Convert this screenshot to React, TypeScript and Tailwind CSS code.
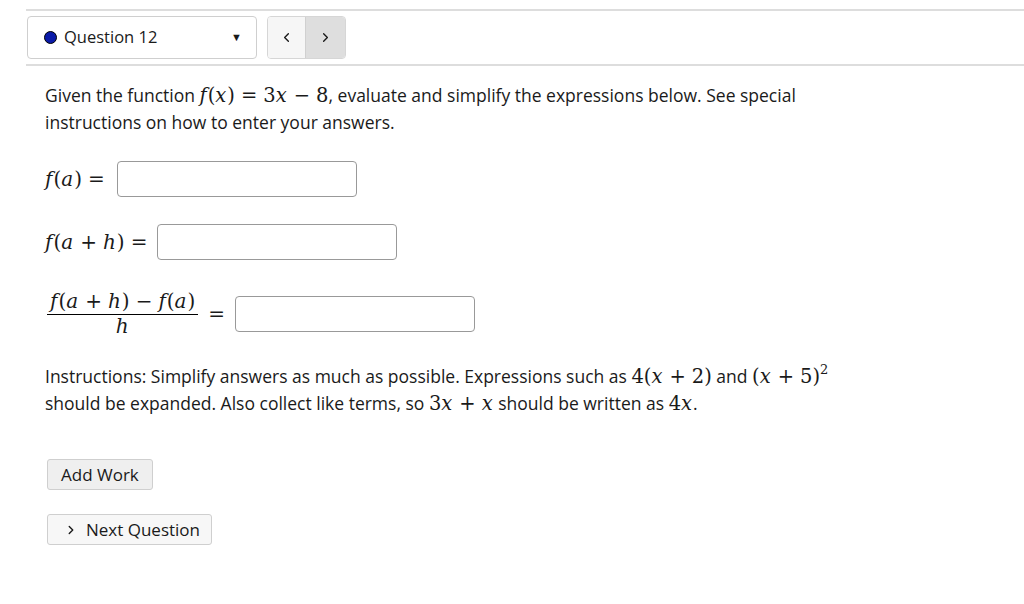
import { ChevronLeft, ChevronRight } from 'lucide-react';

const serif = "font-['DejaVu_Serif','Liberation_Serif',serif]";

function Mi({ children }: { children: React.ReactNode }) {
  return <span className="italic pr-[1px]">{children}</span>;
}

function Rel({ children }: { children: React.ReactNode }) {
  return <span className="not-italic px-[6px]">{children}</span>;
}

function AnswerBox() {
  return <input type="text" className="w-[240px] h-[36px] border border-[#999] rounded-[4px] bg-white outline-none" />;
}

export default function App() {
  return (
    <div className="w-[1024px] h-[604px] bg-white pl-[26px] pt-[9px] text-[#1a1a1a] font-['Open_Sans','Liberation_Sans',sans-serif] text-[17.5px]">
      <div className="border-t-2 border-b-2 border-[#dddddd] py-[4px]">
        <div className="flex items-center gap-[10px] py-[1px] pl-[1px]">
          <div className="w-[230px] h-[43px] border border-[#cfcfcf] rounded-[4px] flex items-center pl-[16px] pr-[12px]">
            <span className="w-[13px] h-[13px] rounded-full bg-[#0a1aa8] border border-black mr-[7px]" />
            <span className="text-[16.5px]">Question 12</span>
            <span className="ml-auto text-[11px] mr-[2px]">▼</span>
          </div>
          <div className="flex h-[43px] border border-[#d6d6d6] rounded-[4px] overflow-hidden">
            <div className="w-[38px] bg-[#f6f6f6] flex items-center justify-center border-r border-[#d0d0d0]">
              <ChevronLeft size={15} strokeWidth={2.2} />
            </div>
            <div className="w-[39px] bg-[#dedede] flex items-center justify-center">
              <ChevronRight size={15} strokeWidth={2.2} />
            </div>
          </div>
        </div>
      </div>

      <div className="pl-[19px] pr-[30px]">
        <p className="mt-[16px] leading-[27px] w-[780px]">
          Given the function{' '}
          <span className={`${serif} text-[19.5px]`}>
            <Mi>f</Mi>(<Mi>x</Mi>)<Rel>=</Rel>3<Mi>x</Mi><Rel>−</Rel>8
          </span>
          , evaluate and simplify the expressions below. See special instructions on how to enter your answers.
        </p>

        <div className={`flex items-center mt-[25px] ${serif} text-[20px]`}>
          <span><Mi>f</Mi>(<Mi>a</Mi>)<Rel>=</Rel></span>
          <span className="ml-[6px]"><AnswerBox /></span>
        </div>

        <div className={`flex items-center mt-[27px] ${serif} text-[20px]`}>
          <span><Mi>f</Mi>(<Mi>a</Mi><Rel>+</Rel><Mi>h</Mi>)<Rel>=</Rel></span>
          <span className="ml-[4px]"><AnswerBox /></span>
        </div>

        <div className={`flex items-center mt-[30px] ${serif} text-[20px]`}>
          <div className="flex flex-col items-center ml-[2px]">
            <span className="leading-[22px] px-[3px]"><Mi>f</Mi>(<Mi>a</Mi><Rel>+</Rel><Mi>h</Mi>)<Rel>−</Rel><Mi>f</Mi>(<Mi>a</Mi>)</span>
            <span className="w-full border-t border-black mt-[2px]" />
            <span className="leading-[22px]"><Mi>h</Mi></span>
          </div>
          <span className="mx-[10px]">=</span>
          <AnswerBox />
        </div>

        <p className="mt-[26px] leading-[27px] w-[840px]">
          Instructions: Simplify answers as much as possible. Expressions such as{' '}
          <span className={`${serif} text-[19.5px]`}>4(<Mi>x</Mi><Rel>+</Rel>2)</span> and{' '}
          <span className={`${serif} text-[19.5px]`}>(<Mi>x</Mi><Rel>+</Rel>5)<sup className="text-[13px] relative -top-[9px] align-baseline">2</sup></span>
          <br />
          should be expanded. Also collect like terms, so{' '}
          <span className={`${serif} text-[19.5px]`}>3<Mi>x</Mi><Rel>+</Rel><Mi>x</Mi></span> should be written as{' '}
          <span className={`${serif} text-[19.5px]`}>4<Mi>x</Mi></span>.
        </p>

        <button className="mt-[42px] ml-[2px] h-[31px] px-[13px] bg-[#efefef] border border-[#cfcfcf] rounded-[3px] text-[17px] block">
          Add Work
        </button>

        <button className="mt-[24px] ml-[2px] h-[31px] pl-[16px] pr-[11px] bg-[#f7f7f7] border border-[#cfcfcf] rounded-[3px] text-[17px] flex items-center gap-[8px]">
          <ChevronRight size={14} strokeWidth={2.4} />
          Next Question
        </button>
      </div>
    </div>
  );
}
